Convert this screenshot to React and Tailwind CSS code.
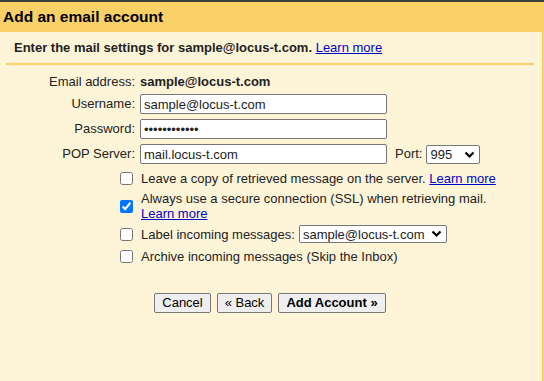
import React from "react";

function Chevron() {
  return (
    <svg width="11" height="8" viewBox="0 0 11 8" className="shrink-0">
      <path d="M1.5 1.5 L5.5 5.5 L9.5 1.5" fill="none" stroke="#000" strokeWidth="2.2" />
    </svg>
  );
}

function FakeSelect({ value, className }) {
  return (
    <div
      className={
        "flex items-center justify-between bg-white border border-[#767676] rounded-[2px] pl-[3px] pr-[4px] " +
        className
      }
    >
      <span className="leading-none">{value}</span>
      <Chevron />
    </div>
  );
}

function Field({ label, children }) {
  return (
    <div className="flex items-center">
      <div className="w-[135px] text-right">{label}</div>
      <div className="ml-[5px] flex items-center">{children}</div>
    </div>
  );
}

function Check({ checked, children, className }) {
  return (
    <div className={"flex items-center pl-[120px] " + className}>
      <input
        type="checkbox"
        defaultChecked={checked}
        className="w-[13px] h-[13px] shrink-0"
      />
      <div className="ml-[8px] leading-[15px]">{children}</div>
    </div>
  );
}

export default function App() {
  const learn = (
    <a href="#" className="text-[#0000cc] underline">
      Learn more
    </a>
  );

  return (
    <div
      className="w-[544px] h-[381px] bg-[#fef5d9] text-[13px] leading-[16px] text-[#222] overflow-hidden flex flex-col"
      style={{ fontFamily: '"Liberation Sans", Arial, sans-serif' }}
    >
      <div className="h-[2px] bg-[#3c3c3c]" />
      <div className="h-[30px] bg-[#f9d166] flex items-center pl-[3px]">
        <h1 className="text-[15.5px] leading-[20px] font-bold text-black">Add an email account</h1>
      </div>

      <div className="flex-1 border-r-2 border-[#f9d166]">
        <div className="pt-[8px] pl-[14px]">
          <span className="font-bold">Enter the mail settings for sample@locus-t.com.</span> {learn}
        </div>
        <div className="mt-[7px] ml-[6px] w-[528px] h-[2px] bg-[#f9d166]" />

        <div className="mt-[9px] flex flex-col gap-[4px]">
          <Field label="Email address:">
            <span className="font-bold">sample@locus-t.com</span>
          </Field>
          <div className="flex flex-col gap-[5px]">
            <Field label="Username:">
              <input
                defaultValue="sample@locus-t.com"
                className="w-[247px] h-[20px] bg-white border border-[#767676] rounded-[2px] pl-[3px] outline-none"
              />
            </Field>
            <Field label="Password:">
              <input
                type="password"
                defaultValue="abcdefghijkl"
                className="w-[247px] h-[20px] bg-white border border-[#767676] rounded-[2px] pl-[3px] outline-none"
              />
            </Field>
            <Field label="POP Server:">
              <input
                defaultValue="mail.locus-t.com"
                className="w-[247px] h-[20px] bg-white border border-[#767676] rounded-[2px] pl-[3px] outline-none"
              />
              <span className="ml-[8px]">Port:</span>
              <FakeSelect value="995" className="ml-[4px] w-[54px] h-[19px] mt-[1px]" />
            </Field>
          </div>
        </div>

        <Check className="mt-[7px]">
          Leave a copy of retrieved message on the server. {learn}
        </Check>
        <Check checked className="mt-[5px]">
          Always use a secure connection (SSL) when retrieving mail.
          <br />
          {learn}
        </Check>
        <Check className="mt-[4px]">
          <div className="flex items-center">
            <span>Label incoming messages:</span>
            <FakeSelect value="sample@locus-t.com" className="ml-[4px] w-[148px] h-[18px]" />
          </div>
        </Check>
        <Check className="mt-[6px]">Archive incoming messages (Skip the Inbox)</Check>

        <div className="mt-[29px] ml-[154px] flex gap-[6px]">
          <button className="w-[57px] h-[20px] bg-[#efefef] border border-[#767676] rounded-[2px] text-black">
            Cancel
          </button>
          <button className="w-[55px] h-[20px] bg-[#efefef] border border-[#767676] rounded-[2px] text-black">
            « Back
          </button>
          <button className="w-[108px] h-[20px] bg-[#efefef] border border-[#767676] rounded-[2px] text-black font-bold">
            Add Account »
          </button>
        </div>
      </div>
    </div>
  );
}
